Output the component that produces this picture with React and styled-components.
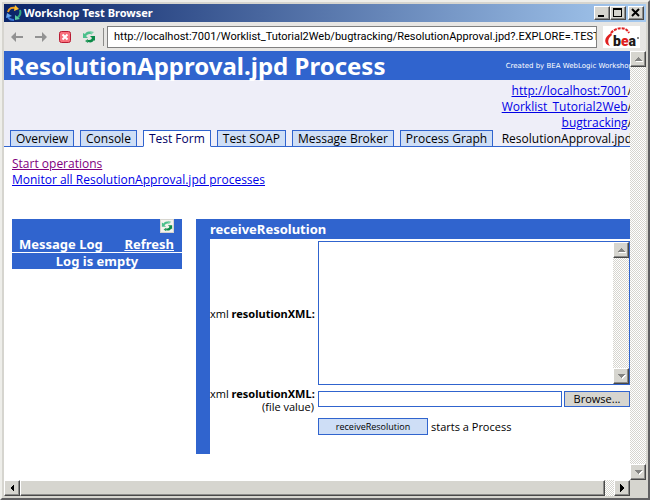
import React from 'react'
import styled, { createGlobalStyle, css } from 'styled-components'

const address = 'http://localhost:7001/Worklist_Tutorial2Web/bugtracking/ResolutionApproval.jpd?.EXPLORE=.TEST'
const tabs = ['Overview', 'Console', 'Test Form', 'Test SOAP', 'Message Broker', 'Process Graph']

const ScrollButton = ({ dir, muted }) => {
    const points = {
        up: '3,9 7,5 11,9',
        down: '3,5 11,5 7,9',
        left: '5,7 9,3 9,11',
        right: '9,7 5,3 5,11',
    }
    return (
        <BarButton type="button" aria-label={`Scroll ${dir}`}>
            <svg width="14" height="14" viewBox="0 0 14 14" shapeRendering="crispEdges">
                {muted && <polygon points={points[dir]} fill="#fff" transform="translate(1 1)" />}
                <polygon points={points[dir]} fill={muted ? '#848482' : '#000'} />
            </svg>
        </BarButton>
    )
}

const RefreshArrows = ({ size }) => (
    <svg width={size} height={size} viewBox="0 0 14 14">
        <path d="M1 3v5h5L4 6c2-2 3-2 5-2V2C6 1 4 2 3 4z" fill="#4cc08c" />
        <path d="M13 11V6H8l2 2c-1 2-2 2-4 2v2c3 1 5 0 6-2z" fill="#0c8a48" />
        <path d="M8 1l4 1-3 3z" fill="#7cd0a8" />
        <path d="M6 13l-3-2 3-2z" fill="#2c9c60" />
    </svg>
)

const App = () => {
    return (
        <Window>
            <GlobalStyle />
            <TitleBar>
                <svg width="16" height="16" viewBox="0 0 16 16" fill="none">
                    <path d="M2 7C3 3 6 2 10 3" stroke="#f0a020" strokeWidth="2" />
                    <path d="M9 0l4 4-5 2z" fill="#ffc030" />
                    <path d="M14 5c1 3 0 6-3 8" stroke="#30a880" strokeWidth="2" />
                    <path d="M9 10v5l5-1z" fill="#58c8a0" />
                    <path d="M8 15c-3 0-5-1-6-3" stroke="#3878d8" strokeWidth="2" />
                    <path d="M0 13l1-5 5 3z" fill="#68a8f0" />
                </svg>
                <WindowTitle>Workshop Test Browser</WindowTitle>
                <WindowButton type="button" aria-label="Minimize">
                    <svg width="12" height="10" viewBox="0 0 12 10"><path d="M2 7h6v2H2z" /></svg>
                </WindowButton>
                <WindowButton type="button" aria-label="Maximize">
                    <svg width="12" height="10" viewBox="0 0 12 10"><path d="M1 0h9v9H1zM2 2v6h7V2z" fillRule="evenodd" /></svg>
                </WindowButton>
                <WindowButton type="button" aria-label="Close" $apart>
                    <svg width="12" height="10" viewBox="0 0 12 10"><path d="M2 1l7 7M9 1L2 8" stroke="#000" strokeWidth="2" /></svg>
                </WindowButton>
            </TitleBar>

            <Toolbar>
                <Tools>
                    <ToolButton type="button" aria-label="Back">
                        <svg width="14" height="14" viewBox="0 0 14 14"><path d="M1 7l5-5v4h7v2H6v4z" fill="#929292" /></svg>
                    </ToolButton>
                    <ToolButton type="button" aria-label="Forward">
                        <svg width="14" height="14" viewBox="0 0 14 14"><path d="M13 7L8 2v4H1v2h7v4z" fill="#929292" /></svg>
                    </ToolButton>
                    <ToolButton type="button" aria-label="Stop">
                        <svg width="14" height="14" viewBox="0 0 14 14">
                            <rect x="1.5" y="1.5" width="11" height="11" rx="2" fill="#f8707c" stroke="#b81c34" />
                            <path d="M4.5 4.5l5 5M9.5 4.5l-5 5" stroke="#fff" strokeWidth="2" />
                        </svg>
                    </ToolButton>
                    <ToolButton type="button" aria-label="Reload">
                        <RefreshArrows size={14} />
                    </ToolButton>
                </Tools>
                <Divider />
                <Address aria-label="Address" defaultValue={address} />
                <svg width="37" height="22" viewBox="0 0 37 22">
                    <rect width="37" height="22" fill="#fff" />
                    <path d="M7 20C0 18 1 11 8 7l1 2c-4 3-5 7-2 11z" fill="#e02020" />
                    <path d="M8 7C13 1 23 0 26 7" fill="none" stroke="#e02020" strokeWidth="2" strokeDasharray="3 1" />
                    <text x="10" y="20" fontFamily="Roboto, sans-serif" fontWeight="900" fontSize="14" fill="#e02020">
                        <tspan fill="#201818">b</tspan>e<tspan fill="#201818">a</tspan>
                    </text>
                    <circle cx="35" cy="12" r="1" fill="#606060" />
                </svg>
            </Toolbar>

            <Viewport>
                <Page>
                    <Banner>
                        <h1>ResolutionApproval.jpd Process</h1>
                        <small>Created by BEA WebLogic Workshop</small>
                    </Banner>
                    <Navigation>
                        <Tabs>
                            {tabs.map((tab) => (
                                <Tab key={tab} type="button" $active={tab === 'Test Form'}>{tab}</Tab>
                            ))}
                        </Tabs>
                        <Path>
                            <span><a href="#host">http://localhost:7001</a>/</span>
                            <span><a href="#project">Worklist_Tutorial2Web</a>/</span>
                            <span><a href="#folder">bugtracking</a>/</span>
                            <span>ResolutionApproval.jpd</span>
                        </Path>
                    </Navigation>

                    <Operations>
                        <VisitedLink href="#start">Start operations</VisitedLink>
                        <a href="#monitor">Monitor all ResolutionApproval.jpd processes</a>
                    </Operations>

                    <Columns>
                        <MessageLog>
                            <LogHeader>
                                <span>Message Log</span>
                                <RefreshLink href="#refresh">
                                    <IconBox><RefreshArrows size={12} /></IconBox>
                                    Refresh
                                </RefreshLink>
                            </LogHeader>
                            <LogEmpty>Log is empty</LogEmpty>
                        </MessageLog>

                        <FormPanel>
                            <h2>receiveResolution</h2>
                            <Fields>
                                <label htmlFor="xml">xml <b>resolutionXML:</b></label>
                                <TextBox>
                                    <textarea id="xml" />
                                    <ScrollBar>
                                        <ScrollButton dir="up" muted />
                                        <ScrollButton dir="down" muted />
                                    </ScrollBar>
                                </TextBox>

                                <label htmlFor="xml-file">xml <b>resolutionXML:</b><br />(file value)</label>
                                <FileRow>
                                    <input id="xml-file" type="text" />
                                    <button type="button">Browse...</button>
                                </FileRow>

                                <SubmitRow>
                                    <button type="button">receiveResolution</button>
                                    <span>starts a Process</span>
                                </SubmitRow>
                            </Fields>
                        </FormPanel>
                    </Columns>
                </Page>

                <ScrollBar>
                    <ScrollButton dir="up" muted />
                    <ScrollButton dir="down" muted />
                </ScrollBar>
                <ScrollBar $horizontal>
                    <ScrollButton dir="left" />
                    <Thumb />
                    <ScrollButton dir="right" />
                </ScrollBar>
                <Corner />
            </Viewport>
        </Window>
    )
}

export default App

const blue = '#3064ce'
const face = '#d6d5cf'

const uiFont = "'Open Sans', 'Noto Sans', sans-serif"
const boldFont = "'Noto Sans', 'Open Sans', sans-serif"

const GlobalStyle = createGlobalStyle`
    * {
        box-sizing: border-box;
    }

    body {
        margin: 0;
        font-family: ${uiFont};
        font-size: 12px;
        line-height: 16px;
        color: #000;
    }

    button, input, textarea {
        font-family: inherit;
        border-radius: 0;
        margin: 0;
        color: #000;
    }

    svg {
        display: block;
        flex: none;
    }

    a {
        color: #0000e6;
        text-decoration: underline;
    }
`

const raised = css`
    border: 1px solid;
    border-color: #fff #484848 #484848 #fff;
    box-shadow: inset -1px -1px #8c8c8a;
    background: ${face};
`

const Window = styled.div`
    display: flex;
    flex-direction: column;
    height: 100vh;
    padding: 2px;
    background: ${face};
    border: 2px solid;
    border-color: #eeeeea #606062 #606062 #eeeeea;
`

const TitleBar = styled.div`
    display: flex;
    align-items: center;
    height: 18px;
    padding: 0 2px;
    background: linear-gradient(to right, #0a2468, #a6caf0);
`

const WindowTitle = styled.div`
    flex: 1;
    padding-left: 2px;
    font-family: ${boldFont};
    font-size: 11px;
    font-weight: 700;
    color: #fff;
`

const WindowButton = styled.button`
    ${raised}
    width: 16px;
    height: 14px;
    padding: 1px;
    margin-left: ${(props) => (props.$apart ? '2px' : '0')};
`

const Toolbar = styled.div`
    display: flex;
    align-items: center;
    height: 29px;
    padding: 0 6px;
    background: #e7e6e4;
`

const Tools = styled.div`
    display: flex;
    gap: 10px;
`

const ToolButton = styled.button`
    display: flex;
    justify-content: center;
    width: 14px;
    padding: 0;
    border: none;
    background: none;
`

const Divider = styled.div`
    width: 1px;
    height: 18px;
    margin: 0 3px 0 7px;
    background: #8c8c8a;
`

const Address = styled.input`
    flex: 1;
    min-width: 0;
    height: 22px;
    padding: 0 0 0 6px;
    margin-right: 6px;
    border: 1px solid #808080;
    background: #fff;
    font-family: Roboto, sans-serif;
    font-size: 11px;
`

const Viewport = styled.div`
    display: grid;
    grid-template-columns: minmax(0, 1fr) 16px;
    grid-template-rows: minmax(0, 1fr) 16px;
    flex: 1;
    min-height: 0;
`

const Page = styled.main`
    overflow: hidden;
    background: #fff;
`

const Banner = styled.header`
    display: flex;
    align-items: center;
    justify-content: space-between;
    height: 29px;
    padding-left: 5px;
    background: ${blue};
    color: #fff;
    white-space: nowrap;

    h1 {
        margin: 0;
        font-family: ${boldFont};
        font-size: 24px;
        line-height: 29px;
    }

    small {
        font-family: 'DejaVu Sans', sans-serif;
        font-size: 7px;
        line-height: 14px;
        margin-right: -3px;
    }
`

const Navigation = styled.nav`
    display: flex;
    align-items: flex-end;
    height: 67px;
    background: #eeeef8;
    box-shadow: inset 0 -1px ${blue};
`

const Tabs = styled.div`
    display: flex;
    gap: 6px;
    padding-left: 6px;
`

const Tab = styled.button`
    height: 17px;
    padding: 0 5px;
    border: 1px solid ${blue};
    border-bottom-color: ${(props) => (props.$active ? '#fff' : blue)};
    background: ${(props) => (props.$active ? '#fff' : '#cedef6')};
    color: ${(props) => (props.$active ? '#000066' : '#000')};
    font-size: 12px;
    line-height: 15px;
    white-space: nowrap;
`

const Path = styled.div`
    display: flex;
    flex: 1;
    flex-direction: column;
    align-items: flex-end;
    min-width: 0;
    margin-right: -2px;
    white-space: nowrap;
`

const Operations = styled.div`
    display: flex;
    flex-direction: column;
    align-items: flex-start;
    padding: 9px 8px 31px;
`

const VisitedLink = styled.a`
    color: #800080;
`

const Columns = styled.div`
    display: flex;
    align-items: flex-start;
    gap: 14px;
    padding-left: 8px;
`

const MessageLog = styled.section`
    flex: none;
    width: 170px;
    background: ${blue};
    color: #fff;
    font-family: ${boldFont};
    font-size: 13px;
    font-weight: 700;
`

const LogHeader = styled.div`
    display: flex;
    justify-content: space-between;
    align-items: flex-end;
    padding: 0 8px 0 7px;
    border-bottom: 1px solid #fff;
`

const RefreshLink = styled.a`
    display: flex;
    flex-direction: column;
    align-items: flex-end;
    gap: 3px;
    color: #fff;
`

const IconBox = styled.span`
    display: flex;
    align-items: center;
    justify-content: center;
    width: 14px;
    height: 14px;
    background: #f4f2ee;
    border: 1px solid #d6d5cf;
`

const LogEmpty = styled.div`
    text-align: center;
`

const FormPanel = styled.section`
    flex: 1;
    min-width: 0;
    border-left: 14px solid ${blue};

    h2 {
        margin: 0;
        background: ${blue};
        color: #fff;
        font-family: ${boldFont};
        font-size: 13px;
        line-height: 20px;
    }
`

const Fields = styled.form`
    display: grid;
    grid-template-columns: 104px minmax(0, 1fr);
    column-gap: 4px;
    row-gap: 2px;
    align-items: center;
    padding: 2px 0 19px;
    font-size: 11px;
    line-height: 13px;

    label {
        text-align: right;
        white-space: nowrap;
    }

    b {
        font-family: ${boldFont};
    }
`

const TextBox = styled.div`
    display: flex;
    height: 144px;
    border: 1px solid ${blue};

    textarea {
        flex: 1;
        min-width: 0;
        border: none;
        outline: none;
        resize: none;
    }
`

const FileRow = styled.div`
    display: flex;
    align-items: flex-start;
    gap: 2px;
    height: 18px;

    input {
        flex: 1;
        min-width: 0;
        height: 16px;
        border: 1px solid ${blue};
    }

    button {
        width: 66px;
        height: 16px;
        padding: 0;
        border: 1px solid ${blue};
        background: ${face};
        font-size: 11px;
        line-height: 14px;
    }
`

const SubmitRow = styled.div`
    grid-column: 2;
    display: flex;
    align-items: center;
    gap: 3px;
    padding-top: 3px;

    button {
        width: 110px;
        height: 17px;
        padding: 0;
        border: 1px solid ${blue};
        background: #cedef6;
        font-size: 9px;
        line-height: 14px;
    }
`

const ScrollBar = styled.div`
    display: flex;
    flex-direction: ${(props) => (props.$horizontal ? 'row' : 'column')};
    justify-content: space-between;
    background: conic-gradient(${face} 25%, #fff 0 50%, ${face} 0 75%, #fff 0) 0 0 / 2px 2px;
`

const BarButton = styled.button`
    ${raised}
    display: flex;
    flex: none;
    width: 16px;
    height: 16px;
    padding: 0;
`

const Thumb = styled.div`
    ${raised}
    flex: 1;
    margin-right: 9px;
`

const Corner = styled.div`
    background: ${face};
`
